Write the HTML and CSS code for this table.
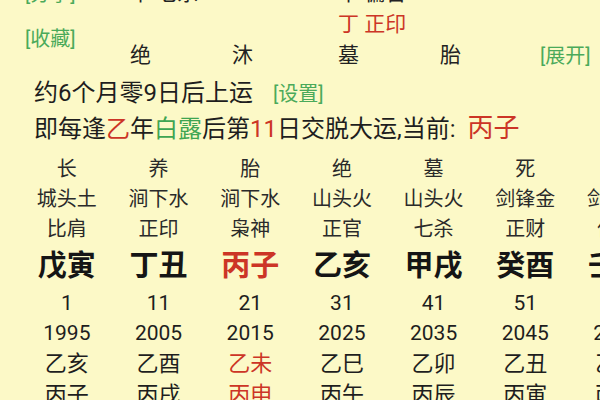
FILE: index.html
```html
<!DOCTYPE html>
<html lang="zh-CN">
<head>
<meta charset="utf-8">
<title>大运</title>
<link rel="stylesheet" href="styles.css">
</head>
<body>
<div class="page">
  <div class="pillars">
    <span class="tag top-tag">[分享]</span>
    <span class="cell r1 c1">甲 七杀</span>
    <span class="cell r1 c3">甲 偏官</span>
    <span class="cell r2 c3 red">丁 正印</span>
    <span class="tag fav">[收藏]</span>
    <span class="cell r3 c1">绝</span>
    <span class="cell r3 c2">沐</span>
    <span class="cell r3 c3">墓</span>
    <span class="cell r3 c4">胎</span>
    <span class="tag expand">[展开]</span>
  </div>
  <p class="line">约6个月零9日后上运 <span class="tag small">[设置]</span></p>
  <p class="line">即每逢<span class="red">乙</span>年<span class="green">白露</span>后第<span class="red">11</span>日交脱大运,当前: <span class="red cur">丙子</span></p>
  <div class="dayun">
    <div class="col">
      <div class="c-stage">长</div><div class="c-nayin">城头土</div><div class="c-god">比肩</div><div class="c-gz">戊寅</div><div class="c-age">1</div><div class="c-year">1995</div><div class="c-ln">乙亥</div><div class="c-ln">丙子</div>
    </div>
    <div class="col">
      <div class="c-stage">养</div><div class="c-nayin">涧下水</div><div class="c-god">正印</div><div class="c-gz">丁丑</div><div class="c-age">11</div><div class="c-year">2005</div><div class="c-ln">乙酉</div><div class="c-ln">丙戌</div>
    </div>
    <div class="col">
      <div class="c-stage">胎</div><div class="c-nayin">涧下水</div><div class="c-god">枭神</div><div class="c-gz red">丙子</div><div class="c-age">21</div><div class="c-year">2015</div><div class="c-ln red">乙未</div><div class="c-ln red">丙申</div>
    </div>
    <div class="col">
      <div class="c-stage">绝</div><div class="c-nayin">山头火</div><div class="c-god">正官</div><div class="c-gz">乙亥</div><div class="c-age">31</div><div class="c-year">2025</div><div class="c-ln">乙巳</div><div class="c-ln">丙午</div>
    </div>
    <div class="col">
      <div class="c-stage">墓</div><div class="c-nayin">山头火</div><div class="c-god">七杀</div><div class="c-gz">甲戌</div><div class="c-age">41</div><div class="c-year">2035</div><div class="c-ln">乙卯</div><div class="c-ln">丙辰</div>
    </div>
    <div class="col">
      <div class="c-stage">死</div><div class="c-nayin">剑锋金</div><div class="c-god">正财</div><div class="c-gz">癸酉</div><div class="c-age">51</div><div class="c-year">2045</div><div class="c-ln">乙丑</div><div class="c-ln">丙寅</div>
    </div>
    <div class="col">
      <div class="c-stage">病</div><div class="c-nayin">剑锋金</div><div class="c-god">偏财</div><div class="c-gz">壬申</div><div class="c-age">61</div><div class="c-year">2055</div><div class="c-ln">乙亥</div><div class="c-ln">丙子</div>
    </div>
  </div>
</div>
</body>
</html>
```
FILE: styles.css
```css
html, body {
  margin: 0;
  padding: 0;
  background: #fcf9c7;
}
body {
  width: 600px;
  height: 400px;
  overflow: hidden;
  font-family: Roboto, "Noto Sans CJK SC", sans-serif;
  color: #1e1e1e;
}
.page {
  width: 600px;
  height: 400px;
  overflow: hidden;
}
.red { color: #cc3526; }
.green { color: #3fa552; }
.tag {
  color: #4aaa5a;
  font-size: 20px;
}

/* pillars header */
.pillars {
  display: grid;
  grid-template-columns: 105px 102px 106px 102px 98px 1fr;
  grid-template-rows: 31px 31px 31px;
  margin-top: -22px;
  padding-left: 25px;
  font-size: 21px;
  align-items: center;
  line-height: 1;
}
.cell { white-space: nowrap; color: #222; }
.cell.red { color: #cc3526; }
.r1 { grid-row: 1; }
.r2 { grid-row: 2; }
.r3 { grid-row: 3; }
.c1 { grid-column: 2; }
.c2 { grid-column: 3; }
.c3 { grid-column: 4; }
.c4 { grid-column: 5; }
.top-tag { grid-row: 1; grid-column: 1; }
.fav { grid-row: 2 / 4; grid-column: 1; margin-top: -2px; }
.expand { grid-row: 3; grid-column: 6; margin-left: 2px; }

/* info lines */
.line {
  margin: 0;
  padding-left: 34px;
  font-size: 24px;
  line-height: 34px;
  white-space: nowrap;
  color: #1e1e1e;
}
.pillars + .line { margin-top: 5px; }
.line .small { font-size: 20px; margin-left: 14px; }
.line .cur { font-size: 26px; margin-left: 6px; }

/* dayun grid */
.dayun {
  display: grid;
  grid-template-columns: repeat(7, 91.7px);
  padding-left: 21px;
  margin-top: 8px;
  width: 700px;
}
.col {
  display: flex;
  flex-direction: column;
  align-items: center;
  text-align: center;
  white-space: nowrap;
}
.col > div { line-height: 1; display: flex; align-items: center; justify-content: center; }
.c-stage { height: 30px; font-size: 20px; color: #2a2a2a; }
.c-nayin { height: 30px; font-size: 20px; color: #2a2a2a; }
.c-god { height: 30px; font-size: 20px; color: #2a2a2a; }
.c-gz { height: 44px; font-size: 29px; font-weight: 700; color: #151515; }
.c-gz.red { color: #cc3526; }
.c-age { height: 30px; font-size: 21px; }
.c-year { height: 30px; font-size: 21px; }
.c-ln { height: 31px; font-size: 22px; }
.c-ln.red { color: #cc3526; }
```
